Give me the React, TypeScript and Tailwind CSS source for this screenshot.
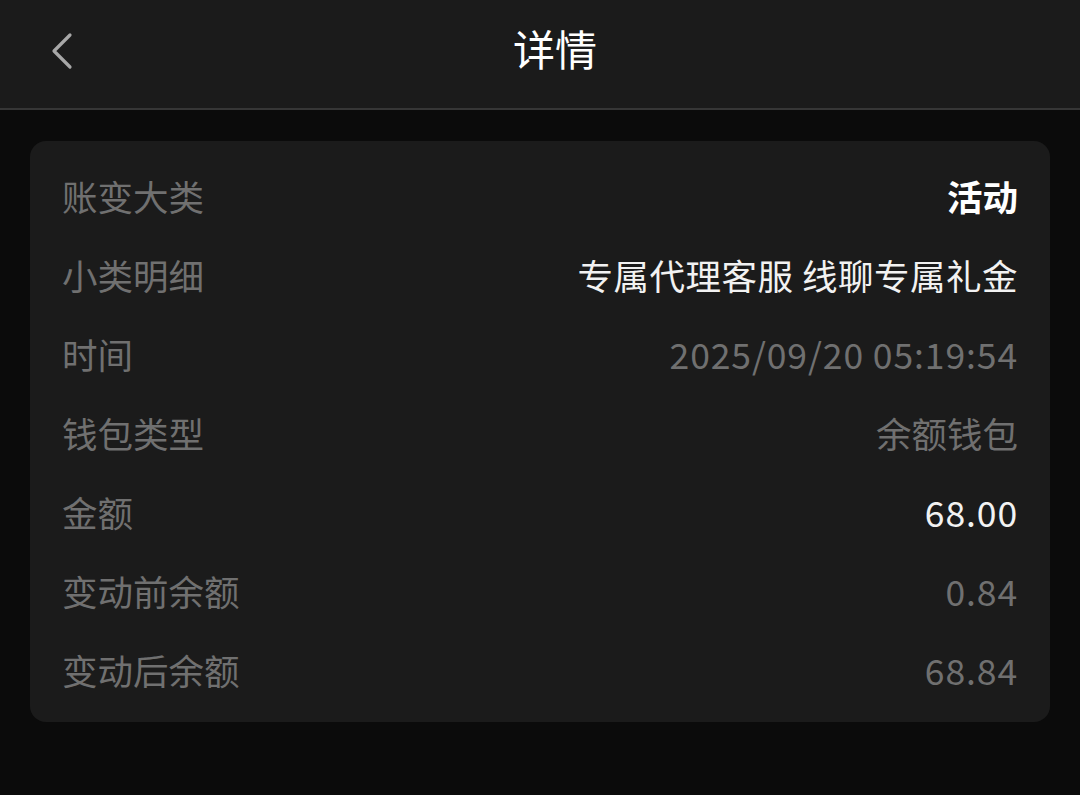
import React from 'react';

interface Row {
    label: string;
    value: string;
    tone: 'bold' | 'white' | 'grey';
    numeric?: boolean;
}

const rows: Row[] = [
    { label: '账变大类', value: '活动', tone: 'bold' },
    { label: '小类明细', value: '专属代理客服 线聊专属礼金', tone: 'white' },
    { label: '时间', value: '2025/09/20 05:19:54', tone: 'grey', numeric: true },
    { label: '钱包类型', value: '余额钱包', tone: 'grey' },
    { label: '金额', value: '68.00', tone: 'white', numeric: true },
    { label: '变动前余额', value: '0.84', tone: 'grey', numeric: true },
    { label: '变动后余额', value: '68.84', tone: 'grey', numeric: true },
];

function valueClass(row: Row) {
    const spacing = row.numeric ? ' tracking-[0.9px]' : ' tracking-[0.5px]';
    if (row.tone === 'bold') return 'text-white font-bold';
    if (row.tone === 'white') return 'text-[#f2f2f2]' + spacing;
    return 'text-[#707070]' + (row.numeric ? spacing : '');
}

export default function App() {
    return (
        <div
            className="w-[1080px] h-[795px] bg-[#0b0b0b] overflow-hidden"
            style={{ fontFamily: '"Noto Sans CJK SC", "Noto Sans", sans-serif' }}
        >
            <header className="relative h-[110px] bg-[#1b1b1b] border-b-2 border-[#363636] flex items-center justify-center">
                <button className="absolute left-[44px] top-[30px] w-[34px] h-[42px] flex items-center justify-center">
                    <svg width="26" height="38" viewBox="0 0 26 38" fill="none">
                        <path d="M22 3 L6 19 L22 35" stroke="#a8a8a8" strokeWidth="3.2" strokeLinecap="round" strokeLinejoin="round" />
                    </svg>
                </button>
                <h1 className="text-[42px] leading-none text-white -mt-[12px] ml-[30px]">详情</h1>
            </header>

            <div className="px-[30px] pt-[31px]">
                <div className="bg-[#1b1b1b] rounded-[16px] px-[32px] pt-[15px] pb-[13px]">
                    {rows.map((row) => (
                        <div key={row.label} className="h-[79px] flex items-center justify-between text-[35.5px] leading-none">
                            <span className="text-[#707070]">{row.label}</span>
                            <span className={valueClass(row)}>{row.value}</span>
                        </div>
                    ))}
                </div>
            </div>
        </div>
    );
}
